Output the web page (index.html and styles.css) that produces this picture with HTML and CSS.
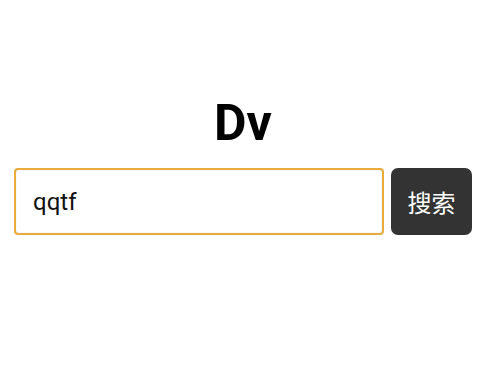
FILE: index.html
```html
<!DOCTYPE html>
<html lang="zh">
<head>
<meta charset="utf-8">
<link rel="stylesheet" href="styles.css">
</head>
<body>
<main class="page">
  <h1 class="title">Dv</h1>
  <form class="search">
    <div class="search-input">qqtf</div>
    <button class="search-btn" type="button">搜索</button>
  </form>
</main>
</body>
</html>
```
FILE: styles.css
```css
html, body {
  margin: 0;
  padding: 0;
  background: #ffffff;
}
body {
  font-family: Roboto, "Noto Sans CJK SC", sans-serif;
  color: #000;
}
.page {
  width: 458px;
  margin-left: 14px;
  padding-top: 96px;
}
.title {
  margin: 0 0 18px;
  text-align: center;
  font-size: 50px;
  font-weight: 700;
  line-height: 54px;
}
.search {
  display: flex;
  gap: 7px;
  margin: 0;
}
.search-input {
  flex: 1;
  height: 67px;
  box-sizing: border-box;
  border: 2px solid #e8ab3c;
  border-radius: 4px;
  box-shadow: inset 0 0 1px rgba(0, 0, 0, 0.25);
  padding-left: 17px;
  display: flex;
  align-items: center;
  font-size: 24px;
  color: #111;
}
.search-btn {
  width: 81px;
  height: 67px;
  border: 0;
  border-radius: 7px;
  background: #333333;
  color: #fff;
  font-family: "Noto Sans CJK SC", sans-serif;
  font-size: 24px;
  padding: 0;
}
```
